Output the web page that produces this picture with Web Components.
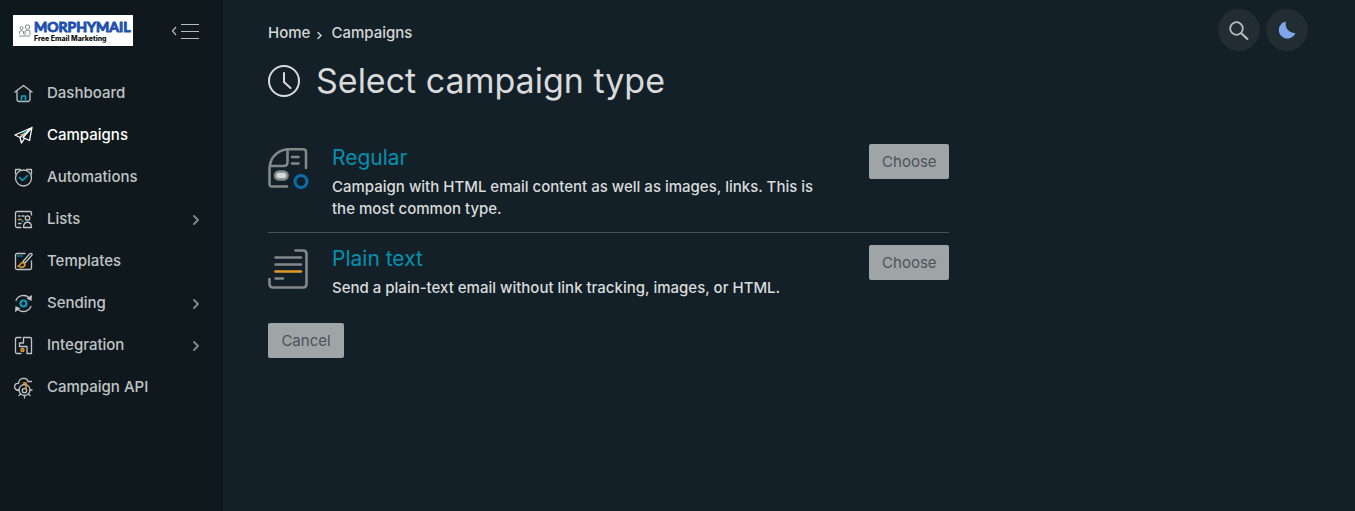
<!DOCTYPE html>
<html lang="en">
<head>
<meta charset="utf-8">
<title>Select campaign type</title>
<style>
  html, body { height: 100%; }
  body { margin: 0; background: #142027; color: #d5d6d7; font: 500 15px/22px Inter, "Open Sans", sans-serif; }
</style>
</head>
<body>
<mail-app></mail-app>
<script>
const ICONS = {
  home: `<path d="M1 8 9.5 1.5 18 8M3 7v8q0 2.500 2.500 2.500h8q2.500 0 2.500-2.500V7"/><path class="teal" d="M7.500 17v-5h4v5"/>`,
  plane: `<path d="M1 9 18 1.5 15.5 14.5 9 11.5M1 9l5 2.500L18 1.500M6 11.500 7.500 17 10.500 12.500M9 11.500 18 1.500"/><path class="teal" d="m9.500 7 2-1.500"/><path class="amber" d="m7 9 1-.5"/>`,
  alarm: `<circle cx="9.500" cy="10" r="8"/><path d="M1.500 6V1.500h5M17.500 6V1.500h-5"/><path class="teal" d="m5.500 9.500 3 3 5-5"/>`,
  list: `<path d="M17.500 5V3q0-1.500-1.500-1.500H3Q1.500 1.500 1.500 3v13q0 1.500 1.500 1.500h4"/><circle cx="13.500" cy="8" r="2.200"/><path d="M9.500 17.500c0-7 8-7 8 0zM8 6h2"/><path class="amber" d="M4.500 9.500H7"/><path d="M4.500 6h1.500M4.500 13.500H7"/><path class="teal" d="M8 11h1"/>`,
  brush: `<path d="M11 1.500H3Q1.500 1.500 1.500 3v13q0 1.500 1.500 1.500h13q1.500 0 1.500-1.500V9M9 9.500 15.500 2q1.500-1.300 2.500 0 .5 1-1 2.300L11 11z"/><path class="teal" d="M4 4h1M7 4h1"/><path class="amber" d="M9 10.500c-3-.5-2 3.500-5 3.500 2 2 7 1.500 7-1.500z"/>`,
  cycle: `<path d="M2 6.500a8.300 8.300 0 0 1 13-3M17 12.500a8.300 8.300 0 0 1-13 3"/><path class="solid" d="m18 1-.5 6-5-2.500zM1 18l.5-6 5 2.500z"/><circle class="teal thick" cx="9.500" cy="9.500" r="3"/>`,
  puzzle: `<path d="M7 1.500H3Q1.500 1.500 1.500 3v13q0 1.500 1.500 1.500h4M9.500 1.500H16q1.500 0 1.500 1.500v14.500h-4.500v-7H5.500V7h4z"/><circle class="amber" cx="8.500" cy="14" r="1.400"/>`,
  api: `<path d="M4 12.500C-1 11 0 5 4.500 5.500 5-1 13-1 14 3.500h3.500"/><circle cx="10.500" cy="12" r="5.500"/><circle cx="10.500" cy="12.500" r="2.200"/><path d="M10.500 17.500V20M5 12H3M18 12h-2M6.500 16 5 17.500M14.500 16l1.500 1.500"/><path class="amber" d="M9.500 5H12v6"/>`,
  chevron: `<path stroke-width="2" d="m8 6 4 4-4 4"/>`
};

class UiIcon extends HTMLElement {
  connectedCallback() {
    this.attachShadow({ mode: "open" }).innerHTML = `
      <style>
        :host { display: block; flex: none; line-height: 0; }
        svg { overflow: visible; fill: none; stroke: currentColor; stroke-width: 1.3; stroke-linejoin: round; stroke-linecap: round; }
        .teal { stroke: #0a9dbd; stroke-width: 1.6; }
        .amber { stroke: #e39a25; stroke-width: 1.6; }
        .thick { stroke-width: 2.2; }
        .solid { fill: currentColor; stroke: none; }
      </style>
      <svg width="19" height="19" viewBox="0 0 19 19" aria-hidden="true">${ICONS[this.getAttribute("name")]}</svg>`;
  }
}

class BrandLogo extends HTMLElement {
  connectedCallback() {
    this.attachShadow({ mode: "open" }).innerHTML = `
      <style>
        :host { display: block; }
        a { display: flex; align-items: center; gap: 2px; width: 115px; height: 31px; padding-left: 5px; background: #fff; text-decoration: none; }
        svg { flex: none; fill: none; stroke: #858b90; }
        span { display: grid; white-space: nowrap; }
        b { font: 700 14px/16px Lato, sans-serif; color: #2350ae; -webkit-text-stroke: 1px #2350ae; }
        small { font: 800 7px/8px Inter, sans-serif; color: #111; }
      </style>
      <a href="#" aria-label="MorphyMail">
        <svg width="14" height="15" viewBox="0 0 14 15"><circle cx="3.500" cy="5" r="1.500"/><circle cx="9.500" cy="4" r="2.200"/><path d="M1.500 11V8.500q2-2 4 0V11M7 12V8q2.500-2 5 0v4M1 13h11"/></svg>
        <span><b>MORPHYMAIL</b><small>Free Email Marketing</small></span>
      </a>`;
  }
}

class NavItem extends HTMLElement {
  connectedCallback() {
    const active = this.hasAttribute("active");
    this.attachShadow({ mode: "open" }).innerHTML = `
      <style>
        :host { display: block; }
        a { display: flex; align-items: center; gap: 14px; height: 42px; padding: 0 18px 0 14px; color: #c0c4c6; text-decoration: none; }
        a[aria-current] { color: #fff; }
        span { flex: 1; }
        .more { color: #7d878b; }
      </style>
      <a href="#" ${active ? 'aria-current="page"' : ""}>
        <ui-icon name="${this.getAttribute("icon")}"></ui-icon><span><slot></slot></span>
        ${this.hasAttribute("expandable") ? '<ui-icon class="more" name="chevron"></ui-icon>' : ""}
      </a>`;
  }
}

class SideBar extends HTMLElement {
  connectedCallback() {
    this.attachShadow({ mode: "open" }).innerHTML = `
      <style>
        :host { display: block; background: #0f191d; }
        header { display: flex; justify-content: space-between; align-items: center; padding: 15px 24px 26px 13px; }
        button { padding: 0; border: 0; background: none; color: #b6babc; line-height: 0; }
        svg { fill: none; stroke: currentColor; }
      </style>
      <header>
        <brand-logo></brand-logo>
        <button type="button" aria-label="Collapse menu"><svg width="28" height="16" viewBox="0 0 28 16"><path d="M5 4 1.500 8 5 12" stroke-width="1.2"/><path d="M10 1.500h18M10 8.500h18M10 15.500h18"/></svg></button>
      </header>
      <nav aria-label="Main"><slot></slot></nav>`;
  }
}

class TopActions extends HTMLElement {
  connectedCallback() {
    this.attachShadow({ mode: "open" }).innerHTML = `
      <style>
        :host { display: flex; gap: 6px; }
        button { display: grid; place-items: center; width: 42px; height: 42px; padding: 0; border: 0; border-radius: 50%; background: #222d33; color: #b9bcbe; }
      </style>
      <button type="button" aria-label="Search"><svg width="20" height="20" viewBox="0 0 20 20" fill="none" stroke="currentColor" stroke-width="1.8"><circle cx="7.500" cy="8.500" r="6.300"/><path d="m12 13 7 6.500" stroke-width="2.2"/></svg></button>
      <button type="button" aria-label="Dark theme"><svg width="18" height="18" viewBox="0 0 18 18"><path fill="#7ea6ea" d="M8 .5A8.600 8.600 0 1 0 17.500 12 9 9 0 0 1 8 .5z"/></svg></button>`;
  }
}

class PageHeading extends HTMLElement {
  connectedCallback() {
    this.attachShadow({ mode: "open" }).innerHTML = `
      <style>
        :host { display: block; }
        nav { display: flex; align-items: center; }
        a { color: inherit; text-decoration: none; }
        nav svg { margin: 5px 8px 0 6px; }
        svg { fill: none; stroke: currentColor; stroke-linecap: round; }
        h1 { display: flex; align-items: center; gap: 16px; margin: 13px 0 0; font: 400 34px/48px Inter, sans-serif; color: #d9dadb; }
      </style>
      <nav aria-label="Breadcrumb"><a href="#">Home</a><svg width="7" height="9" viewBox="0 0 7 9" stroke-width="1.4"><path d="M2 1.500 5 4.500 2 7.500"/></svg><a href="#">Campaigns</a></nav>
      <h1><svg width="32" height="32" viewBox="0 0 32 32" stroke-width="2"><circle cx="16" cy="16" r="15"/><path d="M16 8v9l6.500 6"/></svg><span><slot></slot></span></h1>`;
  }
}

class UiButton extends HTMLElement {
  connectedCallback() {
    this.attachShadow({ mode: "open" }).innerHTML = `
      <style>
        :host { display: block; flex: none; }
        button { display: block; height: 35px; min-width: var(--button-width, 76px); padding: 0 12px; border: 0; border-radius: 2px; background: #9fa4a7; color: #4a5358; font: 400 15px/35px Inter, sans-serif; }
      </style>
      <button type="button"><slot></slot></button>`;
  }
}

class CampaignType extends HTMLElement {
  connectedCallback() {
    this.attachShadow({ mode: "open" }).innerHTML = `
      <style>
        :host { display: flex; gap: 24px; padding: 12px 0; }
        .art { flex: none; padding-top: 4px; line-height: 0; }
        .text { flex: 1; }
        h2 { margin: 0 0 4px; font: 400 21px/28px Inter, sans-serif; }
        a { color: #0490b0; text-decoration: none; }
        p { margin: 0; padding-right: 16px; color: #d9dbdc; }
        ui-button { --button-width: 80px; }
      </style>
      <div class="art"><slot name="art"></slot></div>
      <div class="text"><h2><a href="#">${this.getAttribute("label")}</a></h2><p><slot></slot></p></div>
      <ui-button>Choose</ui-button>`;
  }
}

class MailApp extends HTMLElement {
  connectedCallback() {
    this.attachShadow({ mode: "open" }).innerHTML = `
      <style>
        :host { display: grid; grid-template-columns: 223px 1fr; min-height: 100%; }
        main { padding: 9px 45px 24px; }
        .top { display: flex; justify-content: space-between; align-items: flex-start; }
        page-heading { padding-top: 13px; }
        top-actions { margin-right: 2px; }
        .columns { display: grid; grid-template-columns: 2fr 1fr; gap: 20px; margin-top: 27px; }
        campaign-type + campaign-type { border-top: 1px solid #48545a; }
        .cancel { padding-top: 12px; display: flex; }
        svg { overflow: visible; fill: none; stroke: #82878a; stroke-width: 2.6; stroke-linecap: round; stroke-linejoin: round; }
      </style>
      <side-bar>
        <nav-item icon="home">Dashboard</nav-item>
        <nav-item icon="plane" active>Campaigns</nav-item>
        <nav-item icon="alarm">Automations</nav-item>
        <nav-item icon="list" expandable>Lists</nav-item>
        <nav-item icon="brush">Templates</nav-item>
        <nav-item icon="cycle" expandable>Sending</nav-item>
        <nav-item icon="puzzle" expandable>Integration</nav-item>
        <nav-item icon="api">Campaign API</nav-item>
      </side-bar>
      <main>
        <div class="top"><page-heading>Select campaign type</page-heading><top-actions></top-actions></div>
        <div class="columns"><section>
          <campaign-type label="Regular">
            <svg slot="art" width="40" height="40" viewBox="0 0 40 40"><path d="M19 38.500H4Q1.500 38.500 1.500 36V20Q3 4 19 1.300H35Q38 1.300 38 4V20M19.500 1.500V14q0 4-4 4H2M24 9h6.500M24 15.500h6.500"/><rect x="7" y="23.500" width="12.500" height="8" rx="4" fill="#d5d6d7"/><circle cx="33" cy="33.500" r="6" stroke="#0c6cad" stroke-width="3"/></svg>
            Campaign with HTML email content as well as images, links. This is the most common type.
          </campaign-type>
          <campaign-type label="Plain text">
            <svg slot="art" width="40" height="40" viewBox="0 0 40 40"><path d="M27.500 1.500H35q3.500 0 3.500 3.500V35q0 3.500-3.500 3.500H5Q1.500 38.500 1.500 35V30M7.500 8.500H33M7.500 15.500H33M7.500 29.500H15"/><path d="M7.500 22.500H33" stroke="#e39a25"/></svg>
            Send a plain-text email without link tracking, images, or HTML.
          </campaign-type>
          <div class="cancel"><ui-button>Cancel</ui-button></div>
        </section></div>
      </main>`;
  }
}

customElements.define("ui-icon", UiIcon);
customElements.define("brand-logo", BrandLogo);
customElements.define("nav-item", NavItem);
customElements.define("side-bar", SideBar);
customElements.define("top-actions", TopActions);
customElements.define("page-heading", PageHeading);
customElements.define("ui-button", UiButton);
customElements.define("campaign-type", CampaignType);
customElements.define("mail-app", MailApp);
</script>
</body>
</html>
